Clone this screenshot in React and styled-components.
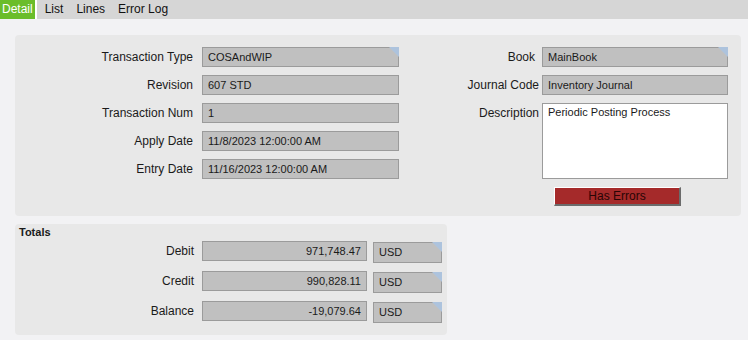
import React from "react";
import styled, { createGlobalStyle } from "styled-components";

const Global = createGlobalStyle`
  body {
    margin: 0;
    background: #f2f2f4;
    font-family: "Liberation Sans", Arial, sans-serif;
    font-size: 12px;
    color: #1a1a1a;
  }
`;

const Page = styled.div`
  width: 748px;
  height: 340px;
  overflow: hidden;
`;

const TabBar = styled.div`
  display: flex;
  height: 19px;
  background: #d6d6d6;
`;

const Tab = styled.div`
  height: 19px;
  line-height: 19px;
  padding: ${(p) => (p.$active ? "0 2px 0 2px" : "0 5px")};
  margin-left: ${(p) => (p.$first ? "0" : "3px")};
  background: ${(p) => (p.$active ? "#6abd2a" : "transparent")};
  color: ${(p) => (p.$active ? "#fff" : "#111")};
  border-right: ${(p) => (p.$active ? "2px solid #fff" : "none")};
`;

const Panel = styled.div`
  margin: ${(p) => p.$margin};
  width: ${(p) => p.$width}px;
  height: ${(p) => p.$height}px;
  box-sizing: border-box;
  background: #e8e8e8;
  border-radius: 4px;
  position: relative;
`;

const Columns = styled.div`
  display: flex;
  padding-top: 12px;
`;

const Column = styled.div`
  display: flex;
  flex-direction: column;
  width: ${(p) => p.$width}px;
`;

const Row = styled.div`
  display: flex;
  align-items: ${(p) => (p.$top ? "flex-start" : "center")};
  height: ${(p) => p.$h || 20}px;
  margin-bottom: ${(p) => (p.$mb === undefined ? 8 : p.$mb)}px;
`;

const Label = styled.div`
  width: ${(p) => p.$w}px;
  text-align: right;
  padding-right: ${(p) => p.$pr || 9}px;
  box-sizing: border-box;
  font-size: 12px;
  padding-top: ${(p) => (p.$top ? 3 : 0)}px;
  color: #1a1a1a;
`;

const Input = styled.div`
  position: relative;
  width: ${(p) => p.$w}px;
  height: ${(p) => p.$h || 20}px;
  box-sizing: border-box;
  background: ${(p) => (p.$white ? "#fff" : "#c0c0c0")};
  border: 1px solid #9b9b9b;
  font-size: 11px;
  padding: ${(p) => (p.$white ? "2px 5px" : "0 5px")};
  display: flex;
  align-items: ${(p) => (p.$white ? "flex-start" : "center")};
  justify-content: ${(p) => (p.$right ? "flex-end" : "flex-start")};
  margin-top: ${(p) => p.$mt || 0}px;
  margin-left: ${(p) => p.$ml || 0}px;
  color: #1a1a1a;
`;

const Corner = styled.span`
  position: absolute;
  top: -1px;
  right: -1px;
  width: 0;
  height: 0;
  border-top: 10px solid #adc3dd;
  border-left: 10px solid transparent;
`;

const ButtonRow = styled.div`
  display: flex;
  padding-left: 139px;
`;

const ErrorButton = styled.div`
  width: 127px;
  height: 19px;
  box-sizing: border-box;
  background: #a52a2a;
  border-top: 1px solid #fff;
  border-left: 1px solid #fff;
  border-right: 2px solid #6b6b6b;
  border-bottom: 2px solid #6b6b6b;
  color: #2a0505;
  font-size: 12px;
  text-align: center;
  line-height: 16px;
`;

const Title = styled.div`
  font-weight: bold;
  font-size: 11px;
  padding: 2px 0 0 4px;
  height: 15px;
`;

const TotalRow = styled.div`
  display: flex;
  align-items: center;
  height: 20px;
  margin-bottom: 10px;
`;

const Field = ({ label, value, w = 197, lw = 187, corner }) => (
  <Row>
    <Label $w={lw}>{label}</Label>
    <Input $w={w}>
      {value}
      {corner && <Corner />}
    </Input>
  </Row>
);

const Total = ({ label, value }) => (
  <TotalRow>
    <Label $w={187} $pr={8}>{label}</Label>
    <Input $w={165} $right>{value}</Input>
    <Input $w={69} $h={21} $mt={2} $ml={6}>
      USD
      <Corner />
    </Input>
  </TotalRow>
);

export default function App() {
  return (
    <Page>
      <Global />
      <TabBar>
        <Tab $active $first>Detail</Tab>
        <Tab>List</Tab>
        <Tab>Lines</Tab>
        <Tab>Error Log</Tab>
      </TabBar>
      <Panel $margin="16px 0 0 15px" $width={726} $height={181}>
        <Columns>
          <Column $width={400}>
            <Field label="Transaction Type" value="COSAndWIP" corner />
            <Field label="Revision" value="607 STD" />
            <Field label="Transaction Num" value="1" />
            <Field label="Apply Date" value="11/8/2023 12:00:00 AM" />
            <Field label="Entry Date" value="11/16/2023 12:00:00 AM" />
          </Column>
          <Column $width={326}>
            <Row>
              <Label $w={127} $pr={7}>Book</Label>
              <Input $w={186}>
                MainBook
                <Corner />
              </Input>
            </Row>
            <Row>
              <Label $w={127} $pr={3}>Journal Code</Label>
              <Input $w={186}>Inventory Journal</Input>
            </Row>
            <Row $top $h={76} $mb={8}>
              <Label $w={127} $pr={3} $top>Description</Label>
              <Input $w={186} $h={76} $white>Periodic Posting Process</Input>
            </Row>
            <ButtonRow>
              <ErrorButton>Has Errors</ErrorButton>
            </ButtonRow>
          </Column>
        </Columns>
      </Panel>
      <Panel $margin="8px 0 0 15px" $width={432} $height={111}>
        <Title>Totals</Title>
        <Total label="Debit" value="971,748.47" />
        <Total label="Credit" value="990,828.11" />
        <Total label="Balance" value="-19,079.64" />
      </Panel>
    </Page>
  );
}
